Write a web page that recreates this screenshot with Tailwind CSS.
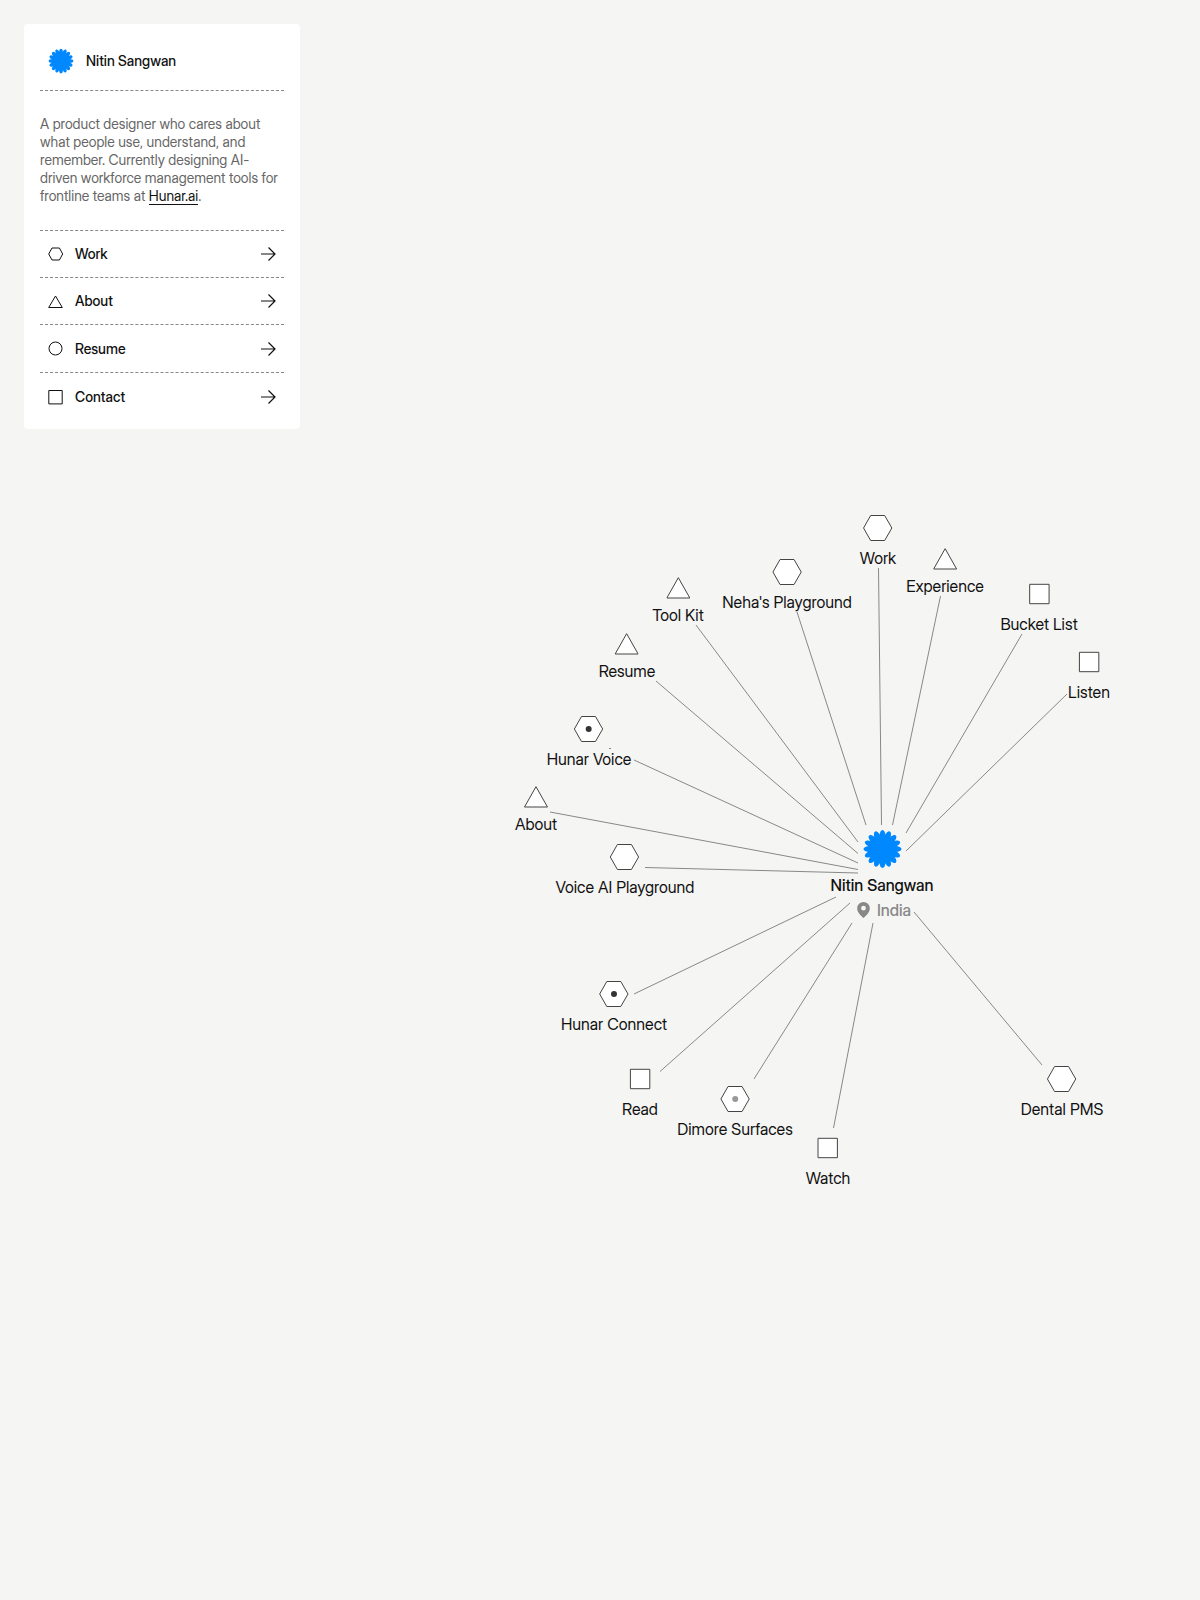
<!DOCTYPE html>
<html lang="en">
<head>
  <meta charset="UTF-8" />
  <title>Nitin Sangwan</title>
  <meta name="viewport" content="width=device-width, initial-scale=1.0" />
  <script src="https://cdn.jsdelivr.net/npm/@tailwindcss/browser@4"></script>
</head>
<body class="bg-[#f5f5f3] font-['Inter_Display','Inter',sans-serif] text-[#111] [font-variation-settings:'opsz'_32]">

  <!-- shared shapes -->
  <svg class="hidden">
    <symbol id="flower" viewBox="-20 -20 40 40">
      <g fill="#0088ff">
        <circle r="14" />
        <g id="petals">
          <g id="petal-pair"><ellipse cy="-13" rx="3" ry="6" /><ellipse cy="13" rx="3" ry="6" /></g>
          <use href="#petal-pair" transform="rotate(22.5)" />
          <use href="#petal-pair" transform="rotate(45)" />
          <use href="#petal-pair" transform="rotate(67.5)" />
        </g>
        <use href="#petals" transform="rotate(90)" />
      </g>
    </symbol>
    <symbol id="hexagon" viewBox="0 0 32 32">
      <path d="M8.800 3.500h14L30 16l-7.200 12.500h-14L1.700 16z" fill="#fff" stroke="#444" stroke-width="1" />
    </symbol>
    <symbol id="triangle" viewBox="0 0 24 24">
      <path d="M12 1.700 23.500 22H.5z" fill="#fff" stroke="#444" stroke-width="1" />
    </symbol>
    <symbol id="square" viewBox="0 0 32 32">
      <path d="M6.300 6.300h19.400v19.400H6.300z" fill="#fff" stroke="#444" stroke-width="1" />
    </symbol>
    <symbol id="arrow" viewBox="0 0 16 16">
      <path d="M1 8h14M8.500 1.500 15 8l-6.500 6.500" fill="none" stroke="#111" stroke-width="1.200" />
    </symbol>
  </svg>

  <main class="relative min-h-screen p-6">
    <aside class="w-[276px] rounded bg-white px-4 pb-2">
      <header class="flex h-[67px] items-center gap-3 border-b border-dashed border-[#888] px-2 pt-2">
        <svg class="size-[26px]"><use href="#flower" /></svg>
        <h1 class="text-sm font-medium">Nitin Sangwan</h1>
      </header>
      <p class="border-b border-dashed border-[#888] pt-6 pb-[25px] text-sm leading-[18px] text-[#666]">
        A product designer who cares about what people use, understand, and remember. Currently designing AI-driven workforce management tools for frontline teams at <a href="#" class="border-b border-[#111] text-[#111]">Hunar.ai</a>.
      </p>
      <nav class="divide-y divide-dashed divide-[#888] text-sm font-medium">
        <a href="#work" class="flex h-[47px] items-center gap-[11px] px-2">
          <svg class="size-4" viewBox="0 0 16 16" fill="none" stroke="#111"><path d="M4 2h7.400l3.300 6-3.300 6H4L.700 8z" /></svg>
          <span class="grow">Work</span>
          <svg class="size-4"><use href="#arrow" /></svg>
        </a>
        <a href="#about" class="flex h-[47px] items-center gap-[11px] px-2">
          <svg class="size-4" viewBox="0 0 16 16" fill="none" stroke="#111"><path d="M7.500 3 14.300 14.500H.700z" /></svg>
          <span class="grow">About</span>
          <svg class="size-4"><use href="#arrow" /></svg>
        </a>
        <a href="#resume" class="flex h-12 items-center gap-[11px] px-2">
          <svg class="size-4" viewBox="0 0 16 16" fill="none" stroke="#111"><circle cx="7.500" cy="7.500" r="6.500" /></svg>
          <span class="grow">Resume</span>
          <svg class="size-4"><use href="#arrow" /></svg>
        </a>
        <a href="#contact" class="flex h-12 items-center gap-[11px] px-2">
          <svg class="size-4" viewBox="0 0 16 16" fill="none" stroke="#111"><path d="M.800 1.500h13.400v13.400H.800z" /></svg>
          <span class="grow">Contact</span>
          <svg class="size-4"><use href="#arrow" /></svg>
        </a>
      </nav>
    </aside>

    <!-- node map -->
    <section aria-label="Map" class="text-base leading-6 whitespace-nowrap">
      <svg class="pointer-events-none absolute top-0 left-0 h-[1200px] w-[1200px]" stroke="#888" stroke-width="1">
        <path d="M878.500 568 881.500 825" />
        <path d="M797 612 866 825" />
        <path d="M696 625 858 842" />
        <path d="M656 681 858 853.500" />
        <path d="M634 760 858 863" />
        <path d="M609 748.500h2" />
        <path d="M550 812 858 869.500" />
        <path d="M645 867.500 858 873" />
        <path d="M634 994 836 897" />
        <path d="M660 1071.500 850 903" />
        <path d="M754 1079 852 923" />
        <path d="M833.500 1128 873 923" />
        <path d="M1042 1065 914 912" />
        <path d="M1067 694 906 851" />
        <path d="M1022 634 906 833" />
        <path d="M940.500 596 892.500 825" />
      </svg>

      <a href="#" class="absolute top-[512px] left-[878px] flex -translate-x-1/2 flex-col items-center gap-0.5">
        <svg class="size-8"><use href="#hexagon" /></svg>Work
      </a>
      <a href="#" class="absolute top-[547px] left-[945px] flex -translate-x-1/2 flex-col items-center gap-[3px]">
        <svg class="size-6"><use href="#triangle" /></svg>Experience
      </a>
      <a href="#" class="absolute top-[578px] left-[1039px] flex -translate-x-1/2 flex-col items-center gap-0.5">
        <svg class="size-8"><use href="#square" /></svg>Bucket List
      </a>
      <a href="#" class="absolute top-[646px] left-[1089px] flex -translate-x-1/2 flex-col items-center gap-0.5">
        <svg class="size-8"><use href="#square" /></svg>Listen
      </a>
      <a href="#" class="absolute top-[556px] left-[787px] flex -translate-x-1/2 flex-col items-center gap-0.5">
        <svg class="size-8"><use href="#hexagon" /></svg>Neha's Playground
      </a>
      <a href="#" class="absolute top-[576px] left-[678px] flex -translate-x-1/2 flex-col items-center gap-[3px]">
        <svg class="size-6"><use href="#triangle" /></svg>Tool Kit
      </a>
      <a href="#" class="absolute top-[632px] left-[627px] flex -translate-x-1/2 flex-col items-center gap-[3px]">
        <svg class="size-6"><use href="#triangle" /></svg>Resume
      </a>
      <a href="#" class="absolute top-[713px] left-[589px] flex -translate-x-1/2 flex-col items-center gap-0.5">
        <svg class="size-8"><use href="#hexagon" /><circle cx="16" cy="16" r="3" fill="#333" /></svg>Hunar Voice
      </a>
      <a href="#" class="absolute top-[785px] left-[536px] flex -translate-x-1/2 flex-col items-center gap-[3px]">
        <svg class="size-6"><use href="#triangle" /></svg>About
      </a>
      <a href="#" class="absolute top-[841px] left-[625px] flex -translate-x-1/2 flex-col items-center gap-0.5">
        <svg class="size-8"><use href="#hexagon" /></svg>Voice AI Playground
      </a>
      <a href="#" class="absolute top-[978px] left-[614px] flex -translate-x-1/2 flex-col items-center gap-0.5">
        <svg class="size-8"><use href="#hexagon" /><circle cx="16" cy="16" r="3" fill="#333" /></svg>Hunar Connect
      </a>
      <a href="#" class="absolute top-[1063px] left-[640px] flex -translate-x-1/2 flex-col items-center gap-0.5">
        <svg class="size-8"><use href="#square" /></svg>Read
      </a>
      <a href="#" class="absolute top-[1083px] left-[735px] flex -translate-x-1/2 flex-col items-center gap-0.5">
        <svg class="size-8"><use href="#hexagon" /><circle cx="16" cy="16" r="3" fill="#999" /></svg>Dimore Surfaces
      </a>
      <a href="#" class="absolute top-[1132px] left-[828px] flex -translate-x-1/2 flex-col items-center gap-0.5">
        <svg class="size-8"><use href="#square" /></svg>Watch
      </a>
      <a href="#" class="absolute top-[1063px] left-[1062px] flex -translate-x-1/2 flex-col items-center gap-0.5">
        <svg class="size-8"><use href="#hexagon" /></svg>Dental PMS
      </a>

      <div class="absolute top-[829px] left-[882px] flex -translate-x-1/2 flex-col items-center">
        <svg class="size-10"><use href="#flower" /></svg>
        <strong class="mt-1 font-medium">Nitin Sangwan</strong>
        <span class="mt-px flex items-center gap-1 font-medium text-[#888]">
          <svg class="size-5" viewBox="0 0 20 20" fill="#888"><path fill-rule="evenodd" d="M10 2a6.300 6.300 0 0 0-6.300 6.300c0 4 3 7 6.300 9.700 3.300-2.700 6.300-5.700 6.300-9.700A6.300 6.300 0 0 0 10 2zm0 3.800a2.400 2.400 0 1 1 0 4.800 2.400 2.400 0 0 1 0-4.800z" /></svg>
          India
        </span>
      </div>
    </section>
  </main>
</body>
</html>
